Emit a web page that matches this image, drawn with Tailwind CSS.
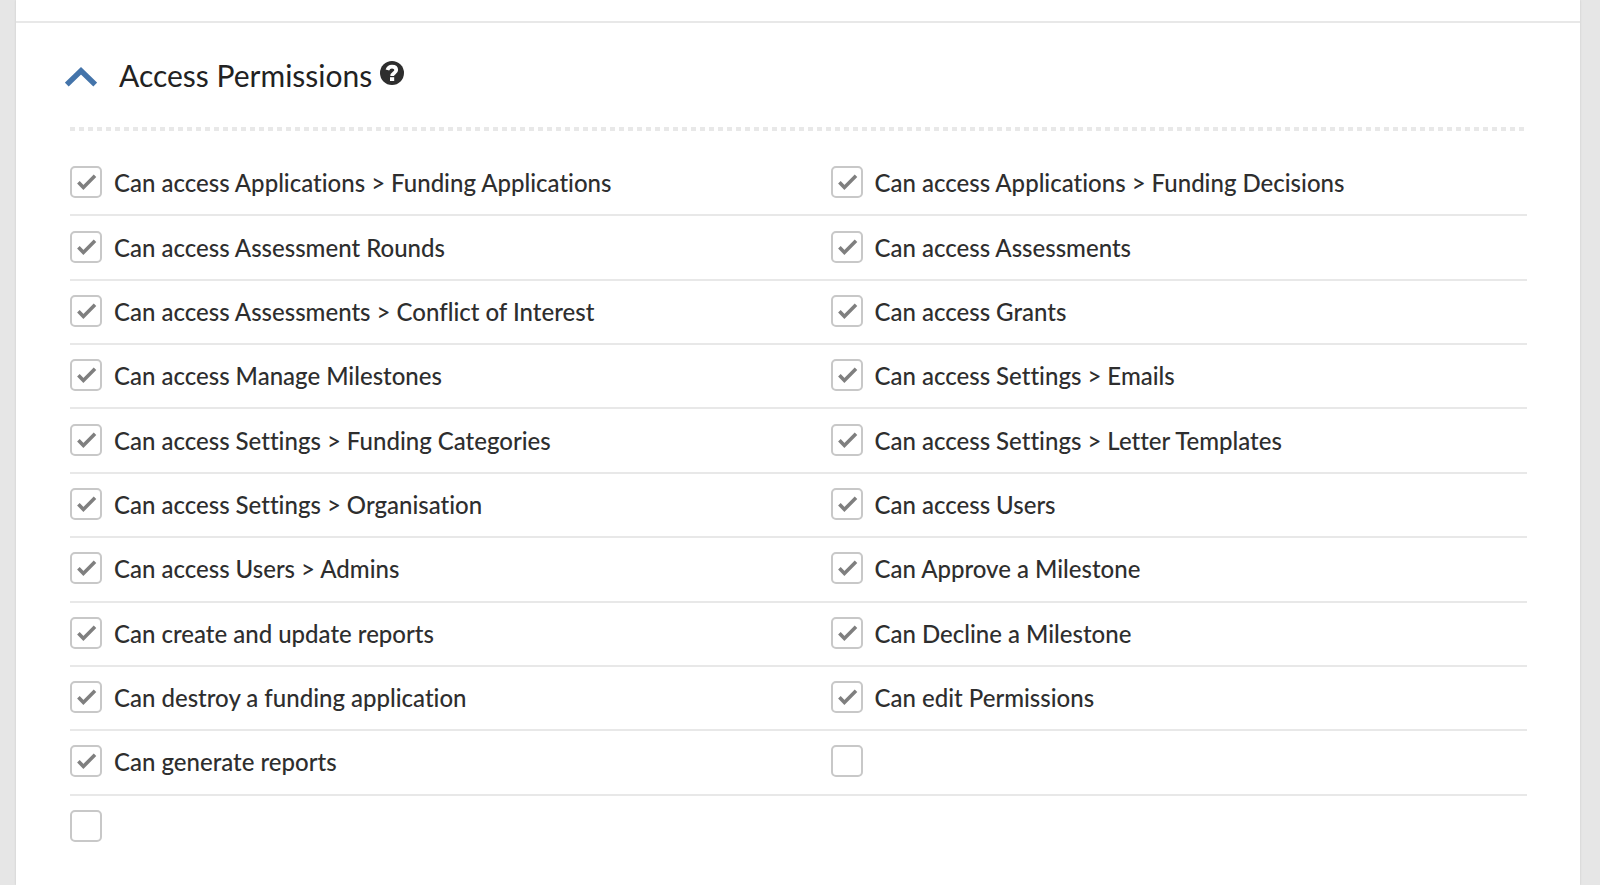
<!DOCTYPE html>
<html lang="en">
<head>
<meta charset="utf-8">
<meta name="viewport" content="width=device-width, initial-scale=1">
<title>Access Permissions</title>
<script src="https://cdn.jsdelivr.net/npm/@tailwindcss/browser@4"></script>
</head>
<body class="min-h-screen bg-[#e6e6e6] pl-4 pr-5 font-['Lato','Open_Sans',sans-serif] text-[#2e2e2e] [font-variant-ligatures:none]">
<main class="min-h-screen bg-white shadow-[0_0_2px_#c8c8c8]">
  <div class="h-[23px] border-b-2 border-[#e8e8e8]"></div>
  <section class="pr-[53px] pb-6 pl-[54px]" aria-labelledby="title">
    <header class="flex h-[104px] items-center">
      <button type="button" aria-label="Collapse section" aria-expanded="true" class="mt-1 mr-[22px] -ml-[5px] shrink-0">
        <svg class="block h-5 w-8" viewBox="0 0 32 20" fill="none" stroke="#4474aa" stroke-width="5.4"><path d="M1.8 17.6 16 3.8 30.2 17.6"/></svg>
      </button>
      <h2 id="title" class="text-[30px] leading-9 text-[#222]">Access Permissions</h2>
      <button type="button" aria-label="Help" class="mb-1 ml-2 shrink-0">
        <svg class="block size-6" viewBox="0 0 24 24"><circle cx="12" cy="12" r="12" fill="#2e2e2e"/><path d="M7.400 9C8.200 6.500 10 5.600 12 5.600c2.600 0 4.200 1.300 4.200 3.400 0 3.200-4 2.800-4 6" fill="none" stroke="#fff" stroke-width="3.800"/><path d="M10 16.200h4.200v3.800h-4.200z" fill="#fff"/></svg>
      </button>
    </header>
    <div class="h-1 bg-[repeating-linear-gradient(to_right,#e8e8e8_0_5px,transparent_5px_9px)]"></div>
    <ul id="permissions" class="mt-[21px] grid min-h-[708px] auto-rows-fr grid-cols-2 text-2xl font-medium"></ul>
  </section>
</main>
<template id="permission">
  <li class="flex items-center border-b-2 border-[#e8e8e8] last:border-transparent even:pl-8">
    <label class="flex items-center gap-3">
      <span class="mb-0.5 grid shrink-0">
        <input type="checkbox" class="peer col-start-1 row-start-1 size-8 appearance-none rounded-[5px] border-2 border-[#c8c8c8] bg-white">
        <svg class="pointer-events-none invisible col-start-1 row-start-1 size-8 peer-checked:visible" viewBox="0 0 32 32" fill="none" stroke="#7f7f7f" stroke-width="3.600"><path d="M8.400 16.200 13.400 21.400 25 9.800"/></svg>
      </span>
      <span data-name></span>
    </label>
  </li>
</template>
<script>
  const names = [
    "Can access Applications > Funding Applications", "Can access Applications > Funding Decisions",
    "Can access Assessment Rounds", "Can access Assessments",
    "Can access Assessments > Conflict of Interest", "Can access Grants",
    "Can access Manage Milestones", "Can access Settings > Emails",
    "Can access Settings > Funding Categories", "Can access Settings > Letter Templates",
    "Can access Settings > Organisation", "Can access Users",
    "Can access Users > Admins", "Can Approve a Milestone",
    "Can create and update reports", "Can Decline a Milestone",
    "Can destroy a funding application", "Can edit Permissions",
    "Can generate reports", "", ""
  ];
  const list = document.getElementById("permissions");
  const template = document.getElementById("permission");
  names.forEach((name) => {
    const item = template.content.cloneNode(true);
    const input = item.querySelector("input");
    input.checked = name !== "";
    if (!name) input.setAttribute("aria-label", "Unnamed permission");
    item.querySelector("[data-name]").textContent = name;
    list.append(item);
  });
</script>
</body>
</html>
